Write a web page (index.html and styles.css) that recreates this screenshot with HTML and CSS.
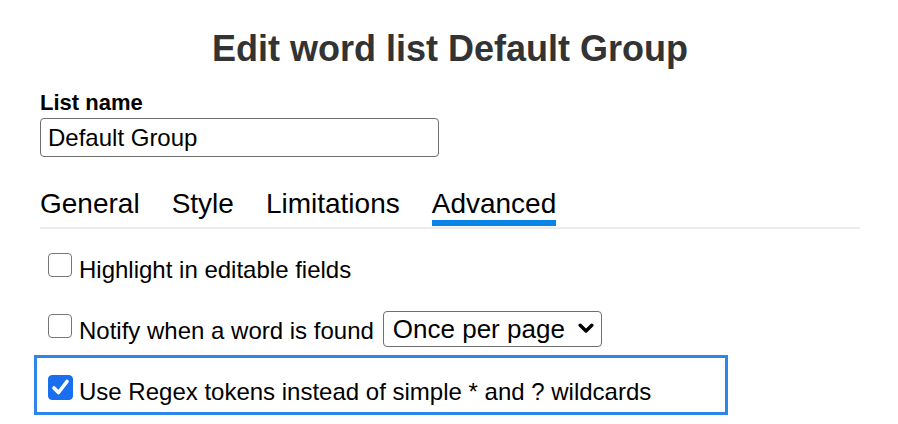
FILE: index.html
```html
<!DOCTYPE html>
<html lang="en">
<head>
<meta charset="utf-8">
<title>Edit word list</title>
<link rel="stylesheet" href="styles.css">
</head>
<body>
<main class="page">
  <h1 class="title">Edit word list Default Group</h1>
  <label class="field-label" for="listname">List name</label>
  <input class="text-input" id="listname" type="text" value="Default Group">
  <nav class="tabs">
    <span class="tab">General</span>
    <span class="tab">Style</span>
    <span class="tab">Limitations</span>
    <span class="tab active">Advanced</span>
  </nav>
  <div class="options">
    <label class="option">
      <span class="check-wrap"><input class="check" type="checkbox"></span>
      <span class="option-text">Highlight in editable fields</span>
    </label>
    <label class="option">
      <span class="check-wrap"><input class="check" type="checkbox"></span>
      <span class="option-text">Notify when a word is found</span>
      <span class="select-wrap">
        <select class="select"><option>Once per page</option><option>Every time</option></select>
        <svg class="chevron" viewBox="0 0 16 11" width="16" height="11"><polyline points="2.2,2.2 8,8 13.8,2.2" fill="none" stroke="#000" stroke-width="3.4" stroke-linecap="round" stroke-linejoin="round"/></svg>
      </span>
    </label>
    <label class="option focused">
      <span class="check-wrap"><input class="check" type="checkbox" checked>
        <svg class="tick" viewBox="0 0 25 25" width="25" height="25"><polyline points="6,13 10.5,17.5 19,6.5" fill="none" stroke="#fff" stroke-width="3.6" stroke-linecap="round" stroke-linejoin="round"/></svg>
      </span>
      <span class="option-text">Use Regex tokens instead of simple * and ? wildcards</span>
    </label>
  </div>
</main>
</body>
</html>
```

FILE: styles.css
```css
html, body {
  margin: 0;
  background: #fff;
}

body {
  font-family: "Liberation Sans", Arial, sans-serif;
  color: #000;
}

.page {
  width: 820px;
  padding: 0 38px 0 40px;
}

.title {
  margin: 28px 0 0;
  font-size: 36px;
  line-height: 42px;
  font-weight: bold;
  text-align: center;
  color: #333;
}

.field-label {
  display: block;
  margin-top: 20px;
  font-size: 22px;
  line-height: 26px;
  font-weight: bold;
}

.text-input {
  display: block;
  margin: 2px 0 0;
  width: 399px;
  height: 39px;
  box-sizing: border-box;
  border: 1.5px solid #6f6f6f;
  border-radius: 4px;
  padding: 0 7px;
  font: 24px "Liberation Sans", Arial, sans-serif;
  color: #000;
  background: #fff;
  outline: none;
}

.tabs {
  display: flex;
  gap: 32px;
  margin-top: 30px;
  padding-bottom: 1px;
  border-bottom: 2px solid #ebebeb;
}

.tab {
  font-size: 28px;
  line-height: 33px;
  border-bottom: 6px solid transparent;
}

.tab.active {
  border-bottom-color: #0a84e6;
}

.options {
  margin-top: 4px;
  display: flex;
  flex-direction: column;
  gap: 1px;
}

.option {
  display: flex;
  align-items: center;
  gap: 6px;
  width: 694px;
  box-sizing: border-box;
  margin-left: -6px;
  border: 3px solid transparent;
  padding: 14px 11px 4px;
  font-size: 24px;
  line-height: 36px;
}

.option.focused {
  border-color: #2f86ea;
}

.option-text {
  line-height: 32px;
  padding-top: 4px;
}

.check-wrap {
  position: relative;
  display: flex;
  flex: none;
  width: 25px;
  margin-bottom: 6px;
}

.check {
  appearance: none;
  -webkit-appearance: none;
  margin: 0;
  width: 24px;
  height: 24px;
  box-sizing: border-box;
  border: 1.5px solid #767676;
  border-radius: 4px;
  background: #fff;
}

.check:checked {
  width: 25px;
  height: 25px;
  background: #1a6ff0;
  border-color: #1a6ff0;
}

.tick {
  position: absolute;
  left: 0;
  top: 0;
  pointer-events: none;
}

.select-wrap {
  position: relative;
  display: flex;
  margin-left: 3px;
}

.select {
  appearance: none;
  -webkit-appearance: none;
  width: 219px;
  height: 36px;
  box-sizing: border-box;
  border: 1.5px solid #6f6f6f;
  border-radius: 4px;
  padding: 0 30px 0 9px;
  font: 26px "Liberation Sans", Arial, sans-serif;
  color: #000;
  background: #fff;
}

.chevron {
  position: absolute;
  right: 8px;
  top: 12px;
  pointer-events: none;
}
```
